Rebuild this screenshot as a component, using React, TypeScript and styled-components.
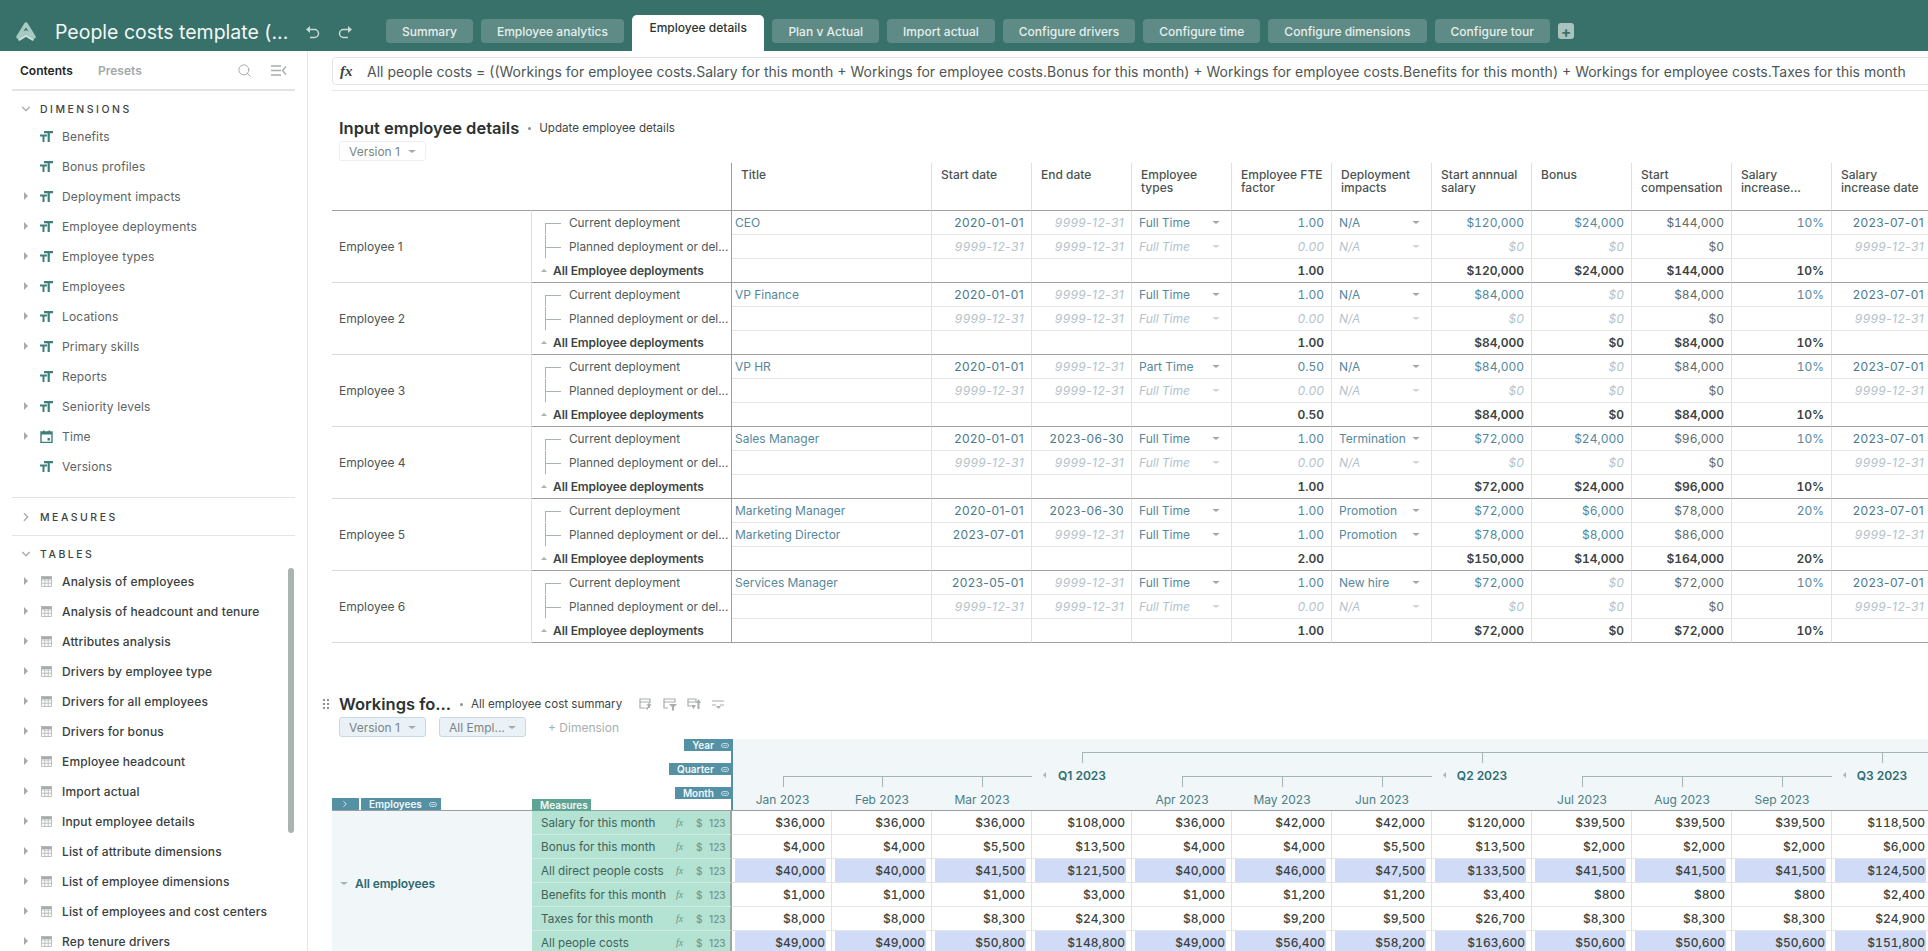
import React from 'react';
import styled, { createGlobalStyle } from 'styled-components';
import { ChevronDown, ChevronRight, Search } from 'lucide-react';

const GlobalStyle = createGlobalStyle`
  html, body {
    margin: 0;
    padding: 0;
    background: #fff;
    font-family: Inter, 'Liberation Sans', sans-serif;
    color: #3a4342;
  }
`;

const Shell = styled.div`
  display: flex;
  flex-direction: column;
  width: 1928px;
  height: 951px;
  overflow: hidden;
`;

/* top bar */
const TopBar = styled.header`
  display: flex;
  flex: 0 0 51px;
  background: #38706a;
`;

const Brand = styled.div`
  display: flex;
  align-items: center;
  width: 386px;
  height: 51px;
  padding: 12px 0 0 16px;
  box-sizing: border-box;
`;

const AppTitle = styled.div`
  width: 250px;
  margin-left: 19px;
  color: #f3f7f6;
  font-size: 19.5px;
  white-space: nowrap;
`;

const HistoryIcon = styled.svg`
  width: 16px;
  height: 16px;
  margin-right: 16px;
  flex: none;
`;

const Tabs = styled.nav`
  display: flex;
  align-items: flex-start;
  gap: 8px;
  padding-top: 19px;
`;

const Tab = styled.div<{ $active?: boolean }>`
  position: relative;
  display: flex;
  align-items: center;
  height: ${(p) => (p.$active ? '36px' : '24px')};
  margin-top: ${(p) => (p.$active ? '-4px' : '0')};
  padding: ${(p) => (p.$active ? '0 17.5px 12px' : '0 16px')};
  box-sizing: border-box;
  border-radius: ${(p) => (p.$active ? '5px 5px 0 0' : '4px')};
  background: ${(p) => (p.$active ? '#fff' : '#5f8b86')};
  color: ${(p) => (p.$active ? '#2c3534' : '#e6efed')};
  font-size: 12px;
  font-weight: 500;
  letter-spacing: 0.01px;
  white-space: nowrap;
`;

const AddTab = styled.div`
  display: flex;
  align-items: center;
  justify-content: center;
  width: 16px;
  height: 16px;
  margin-top: 4px;
  border-radius: 3px;
  background: #a9c3bf;
  color: #38706a;
  font-size: 15px;
  font-weight: 700;
  line-height: 1;
`;

const Body = styled.div`
  display: flex;
  flex: 1;
  min-height: 0;
`;

/* sidebar */
const Sidebar = styled.aside`
  flex: 0 0 308px;
  box-sizing: border-box;
  padding: 0 12px;
  border-right: 1px solid #e4e6e6;
  overflow: hidden;
`;

const SideTabs = styled.div`
  display: flex;
  align-items: center;
  height: 40px;
  box-sizing: border-box;
  padding: 0 8px;
  border-bottom: 2px solid #e3e5e5;
  font-size: 12px;
  font-weight: 600;
`;

const SideTab = styled.span<{ $on?: boolean }>`
  width: 78px;
  color: ${(p) => (p.$on ? '#1f2625' : '#a3a9a8')};
`;

const SideTools = styled.div`
  display: flex;
  align-items: center;
  gap: 19px;
  margin-left: auto;
  color: #a8adac;
`;

const SectionHead = styled.div<{ $h?: number; $line?: boolean; $top?: number }>`
  display: flex;
  align-items: center;
  height: ${(p) => p.$h ?? 25}px;
  margin-top: ${(p) => p.$top ?? 0}px;
  padding-top: 1px;
  box-sizing: border-box;
  color: #3d4443;
  font-size: 10.5px;
  font-weight: 500;
  letter-spacing: 2.5px;
  ${(p) => p.$line && 'border-top: 1px solid #e3e5e5; border-bottom: 1px solid #e3e5e5;'}
`;

const SectionChevron = styled.span`
  display: flex;
  justify-content: center;
  width: 28px;
  color: #a3a9a8;
`;

const SideList = styled.div<{ $gapEnd?: number }>`
  position: relative;
  padding-bottom: ${(p) => p.$gapEnd ?? 0}px;
`;

const SideItem = styled.div<{ $strong?: boolean }>`
  display: flex;
  align-items: center;
  height: 30px;
  color: ${(p) => (p.$strong ? '#3a4040' : '#5d6362')};
  font-size: 12px;
  font-weight: ${(p) => (p.$strong ? 500 : 400)};
  letter-spacing: 0.15px;
  white-space: nowrap;
`;

const CaretSlot = styled.span`
  display: flex;
  justify-content: center;
  width: 28px;
`;

const ItemIcon = styled.svg`
  flex: none;
  width: 13px;
  height: 13px;
  margin-right: 9px;
`;

const ScrollThumb = styled.div`
  position: absolute;
  top: 2px;
  right: 1px;
  width: 6px;
  height: 265px;
  border-radius: 3px;
  background: #abb4b2;
`;

const Caret = styled.i<{ $dir?: 'down' | 'right' | 'up' | 'left'; $color?: string; $size?: number }>`
  display: inline-block;
  flex: none;
  width: 0;
  height: 0;
  ${(p) => {
    const s = p.$size ?? 3;
    const c = p.$color ?? '#a6abaa';
    if (p.$dir === 'right') return `border-top: ${s + 1}px solid transparent; border-bottom: ${s + 1}px solid transparent; border-left: ${s + 1}px solid ${c};`;
    if (p.$dir === 'left') return `border-top: ${s}px solid transparent; border-bottom: ${s}px solid transparent; border-right: ${s}px solid ${c};`;
    if (p.$dir === 'up') return `border-left: ${s}px solid transparent; border-right: ${s}px solid transparent; border-bottom: ${s}px solid ${c};`;
    return `border-left: ${s + 1}px solid transparent; border-right: ${s + 1}px solid transparent; border-top: ${s}px solid ${c};`;
  }}
`;

/* main area */
const Main = styled.main`
  flex: 1;
  min-width: 0;
  padding: 6px 0 0 24px;
  overflow: hidden;
`;

const FormulaWrap = styled.div`
  width: 1700px;
  padding-bottom: 5px;
  border-bottom: 1px solid #e6e8e8;
`;

const FormulaBar = styled.div`
  display: flex;
  align-items: center;
  height: 28px;
  box-sizing: border-box;
  padding-left: 7px;
  border: 1px solid #e3e5e5;
  border-radius: 4px;
  color: #4e5655;
  font-size: 14px;
  white-space: nowrap;
`;

const FxMark = styled.span`
  width: 27px;
  color: #3b4443;
  font-family: 'Liberation Serif', serif;
  font-size: 15px;
  font-style: italic;
  font-weight: 700;
`;

const TitleRow = styled.div<{ $top: number }>`
  display: flex;
  align-items: center;
  height: 20px;
  margin-top: ${(p) => p.$top}px;
  padding-left: 7px;
`;

const DragHandle = styled.svg`
  width: 8px;
  height: 12px;
  margin: 0 9px 0 -17px;
`;

const BlockTitle = styled.h2`
  margin: 0;
  color: #2b3231;
  font-size: 16.5px;
  font-weight: 600;
  white-space: nowrap;
`;

const TitleDot = styled.span`
  width: 3px;
  height: 3px;
  margin: 0 8px 0 9px;
  border-radius: 50%;
  background: #8b9291;
`;

const BlockNote = styled.span`
  color: #3f4746;
  font-size: 11.6px;
  white-space: nowrap;
`;

const ViewTools = styled.div`
  display: flex;
  gap: 9px;
  margin-left: 17px;
`;

const FilterRow = styled.div`
  display: flex;
  align-items: center;
  gap: 13px;
  height: 20px;
  margin: 3px 0 2px;
  padding-left: 7px;
`;

const Chip = styled.div<{ $tint?: boolean }>`
  display: flex;
  align-items: center;
  justify-content: space-between;
  width: 87px;
  height: 20px;
  box-sizing: border-box;
  padding: 0 9px;
  border: 1px solid ${(p) => (p.$tint ? '#c6d8e3' : '#eeeeee')};
  border-radius: 3px;
  background: ${(p) => (p.$tint ? '#eaf2f7' : '#fff')};
  color: #7b8483;
  font-size: 12px;
`;

const AddDimension = styled.span`
  margin-left: 9px;
  color: #a9afae;
  font-size: 12px;
`;

/* input table */
const DetailGrid = styled.div`
  display: grid;
  grid-template-columns: 200px 200px 200px repeat(10, 100px);
  grid-template-rows: 48px;
  grid-auto-rows: 24px;
  width: 1600px;
`;

const HeadCell = styled.div<{ $blank?: boolean; $dark?: boolean }>`
  box-sizing: border-box;
  padding: 5px 0 0 9px;
  border-bottom: 1px solid #9c9f9f;
  border-right: 1px solid ${(p) => (p.$dark ? '#9c9f9f' : p.$blank ? 'transparent' : '#dfe1e1')};
  color: #4c5453;
  font-size: 12px;
  font-weight: 500;
  line-height: 13px;
  white-space: pre-line;
  overflow: hidden;
`;

const EmployeeCell = styled.div`
  display: flex;
  align-items: center;
  grid-row: span 3;
  padding-left: 7px;
  border-right: 1px solid #dfe1e1;
  border-bottom: 1px solid #d9dbdb;
  color: #4d5554;
  font-size: 12px;
`;

const TreeCell = styled.div<{ $first?: boolean }>`
  position: relative;
  display: flex;
  align-items: center;
  padding-left: 37px;
  border-right: 1px solid #9c9f9f;
  color: #515958;
  font-size: 11.8px;
  white-space: nowrap;

  &::before {
    content: '';
    position: absolute;
    left: 13px;
    top: ${(p) => (p.$first ? '12px' : '0')};
    bottom: 1px;
    width: 1px;
    background: #a9b3b2;
  }

  &::after {
    content: '';
    position: absolute;
    left: 13px;
    top: 12px;
    width: 16px;
    height: 1px;
    background: #a9b3b2;
  }
`;

const TotalLabel = styled.div`
  display: flex;
  align-items: center;
  gap: 6px;
  padding-left: 9px;
  border-right: 1px solid #9c9f9f;
  border-bottom: 1px solid #9c9f9f;
  color: #3d4544;
  font-size: 12px;
  font-weight: 600;
  letter-spacing: -0.1px;
  white-space: nowrap;
`;

type Kind = 'input' | 'ghost' | 'calc' | 'total';

const kindColor: Record<Kind, string> = {
  input: '#55889c',
  ghost: '#b3c2c9',
  calc: '#626a69',
  total: '#3c4241',
};

const ValueCell = styled.div<{ $kind: Kind; $left?: boolean; $tight?: boolean; $end?: boolean; $date?: boolean }>`
  display: flex;
  align-items: center;
  justify-content: ${(p) => (p.$tight ? 'flex-start' : p.$left ? 'space-between' : 'flex-end')};
  box-sizing: border-box;
  padding: ${(p) => (p.$tight ? '0 6px 0 3px' : p.$left ? '0 11px 0 7px' : '0 7px 0 0')};
  border-right: 1px solid #e0e2e2;
  border-bottom: 1px solid ${(p) => (p.$end ? '#9c9f9f' : '#e4e6e6')};
  color: ${(p) => (p.$date && p.$kind === 'input' ? '#4b7a8c' : kindColor[p.$kind])};
  font-size: 12px;
  font-style: ${(p) => (p.$kind === 'ghost' ? 'italic' : 'normal')};
  font-weight: ${(p) => (p.$kind === 'total' ? 600 : 400)};
  font-variant-numeric: ${(p) => (p.$date ? 'normal' : 'tabular-nums')};
  letter-spacing: ${(p) => (p.$date ? '0.4px' : '0')};
  white-space: nowrap;
  overflow: hidden;
`;

/* workings pivot */
const PivotHead = styled.div`
  display: flex;
  width: 1600px;
  height: 72px;
  box-sizing: border-box;
  border-bottom: 1px solid #9c9f9f;
`;

const RowAxis = styled.div`
  display: flex;
  flex: none;
  align-items: flex-end;
  width: 200px;
  gap: 2px;
`;

const MeasureAxis = styled.div`
  display: flex;
  flex: none;
  flex-direction: column;
  width: 201px;
  background: linear-gradient(#5491a5, #5491a5) right / 2px 100% no-repeat;
`;

const AxisStack = styled.div`
  display: flex;
  flex-direction: column;
  align-items: flex-end;
  gap: 12px;
`;

const AxisTag = styled.div<{ $green?: boolean; $w?: number }>`
  display: flex;
  align-items: center;
  gap: 7px;
  flex: none;
  width: ${(p) => (p.$w ? `${p.$w}px` : 'auto')};
  height: 12px;
  box-sizing: border-box;
  padding: 0 4px 0 8px;
  background: ${(p) => (p.$green ? '#5fa493' : '#5491a5')};
  color: #f2f8f8;
  font-size: 10px;
  font-weight: 600;
`;

const TimeHead = styled.div`
  display: grid;
  flex: none;
  grid-template-columns: 99px repeat(11, 100px);
  grid-auto-rows: 24px;
  background: #f1f6f8;
`;

const Bracket = styled.div<{ $line?: boolean; $half?: boolean; $tick?: boolean }>`
  position: relative;

  &::before {
    content: '';
    display: ${(p) => (p.$line ? 'block' : 'none')};
    position: absolute;
    top: 13px;
    left: ${(p) => (p.$half ? '50%' : '0')};
    right: 0;
    height: 1px;
    background: #a3b5b6;
  }

  &::after {
    content: '';
    display: ${(p) => (p.$tick ? 'block' : 'none')};
    position: absolute;
    top: 13px;
    bottom: 0;
    left: 50%;
    width: 1px;
    background: #a3b5b6;
  }
`;

const QuarterLabel = styled.div`
  position: relative;
  display: flex;
  align-items: center;
  justify-content: center;
  color: #2f6d72;
  font-size: 12px;
  font-weight: 600;
`;

const QuarterArrow = styled.span`
  position: absolute;
  left: 11px;
  top: 9px;
  display: flex;
`;

const MonthLabel = styled.div`
  display: flex;
  align-items: center;
  justify-content: center;
  color: #4a7f86;
  font-size: 12px;
`;

const PivotGrid = styled.div`
  display: grid;
  grid-template-columns: 200px 200px repeat(12, 100px);
  grid-auto-rows: 24px;
  width: 1600px;
`;

const GroupCell = styled.div`
  display: flex;
  align-items: center;
  gap: 7px;
  grid-row: span 6;
  padding-left: 8px;
  background: #f1f6f8;
  color: #2c6a6e;
  font-size: 12px;
  font-weight: 600;
  letter-spacing: -0.1px;
`;

const MeasureCell = styled.div`
  display: flex;
  align-items: center;
  padding-left: 9px;
  border-right: 2px solid #9da5a3;
  border-bottom: 1px solid #d0ebe2;
  background: #b4e2d3;
  color: #41625a;
  font-size: 11.7px;
  white-space: nowrap;
`;

const MeasureName = styled.span`
  flex: 1;
  min-width: 0;
`;

const MeasureMeta = styled.span<{ $w: number; $serif?: boolean }>`
  flex: none;
  width: ${(p) => p.$w}px;
  color: #73958c;
  font-family: ${(p) => (p.$serif ? "'Liberation Serif', serif" : 'inherit')};
  font-size: 10px;
  font-style: ${(p) => (p.$serif ? 'italic' : 'normal')};
  font-weight: ${(p) => (p.$serif ? 400 : 500)};
`;

const PivotCell = styled.div`
  display: flex;
  padding: 0 5px 0 3px;
  border-right: 1px solid #e0e2e2;
  border-bottom: 1px solid #e4e6e6;
`;

const PivotValue = styled.span<{ $hl?: boolean }>`
  display: flex;
  flex: 1;
  align-items: center;
  justify-content: flex-end;
  padding-right: 1px;
  background: ${(p) => (p.$hl ? '#d0dbf7' : 'transparent')};
  color: #3b4140;
  font-size: 12px;
  font-weight: 500;
  font-variant-numeric: tabular-nums;
`;

/* drawn icons */
const Logo = () => (
  <svg width="20" height="20" viewBox="0 0 20 20" style={{ flex: 'none' }}>
    <path d="M10 2 L18 15 L10 10 L2 15 Z" fill="#38706a" stroke="#a9c9c3" strokeWidth="3.4" strokeLinejoin="round" />
    <path d="M3.5 17.500 L10 13.500 L16.500 17.500" fill="none" stroke="#c9dfda" strokeWidth="2.6" strokeLinecap="round" strokeLinejoin="round" />
  </svg>
);

const Undo = ({ flip }: { flip?: boolean }) => (
  <HistoryIcon viewBox="0 0 16 16" style={flip ? { transform: 'scaleX(-1)' } : undefined}>
    <path d="M5 2 L1 5.5 L5 9 Z" fill="#c8d9d6" />
    <path d="M4 5.5 H9.5 A4 4 0 0 1 9.5 13.5 H5" fill="none" stroke="#c8d9d6" strokeWidth="1.5" />
  </HistoryIcon>
);

const TypeIcon = () => (
  <ItemIcon viewBox="0 0 13 13">
    <path d="M0 4.500h7v2H4.500V12h-2V6.500H0z" fill="#3f7f7b" />
    <path d="M4 1h9v2.200H9.800V12H7.600V3.200H4z" fill="#3f7f7b" />
  </ItemIcon>
);

const CalendarIcon = () => (
  <ItemIcon viewBox="0 0 13 13">
    <path d="M1 2h11v10.5H1z" fill="none" stroke="#3f7f7b" strokeWidth="1.4" />
    <path d="M1 2h11v2.6H1zM3 0.4h1.5V3H3zM8.5 0.4H10V3H8.5zM7.5 8H10v2.4H7.5z" fill="#3f7f7b" />
  </ItemIcon>
);

const TableIcon = () => (
  <ItemIcon viewBox="0 0 13 13">
    <path d="M1 1h11v3H1z" fill="#a5abaa" />
    <path d="M1.5 1.5h10v10h-10zM1.5 5h10M1.5 8.2h10M4.8 4v7.5M8.2 4v7.5" fill="none" stroke="#b5bab9" strokeWidth="0.9" />
  </ItemIcon>
);

const CollapseIcon = () => (
  <svg width="16" height="11" viewBox="0 0 16 11">
    <path d="M0 1h10M0 5.5h10M0 10h10" stroke="#a8adac" strokeWidth="1.4" />
    <path d="M15 1.5 L11.5 5.5 L15 9.5" fill="none" stroke="#a8adac" strokeWidth="1.4" />
  </svg>
);

const LinkGlyph = () => (
  <svg width="8" height="5" viewBox="0 0 8 5" style={{ flex: 'none' }}>
    <rect x="0.5" y="0.5" width="7" height="4" rx="2" fill="none" stroke="#c9dee4" strokeWidth="1" />
    <path d="M2 2.5h4" stroke="#c9dee4" strokeWidth="0.8" />
  </svg>
);

const viewTools = [
  { line: 'M1 2h10v3H1zM1 2v9h5M11 5v1', solid: 'M10 6l3 2.500h-2V11H9V8.500H7zM6 11l3-1v3z' },
  { line: 'M1 2h11v3H1zM1 2v9h4', solid: 'M6 7h8l-3 3v3.500h-2V10z' },
  { line: 'M1 2h8v3H1zM1 2v7h3', solid: 'M4 8h5l-2.500 4zM9 6l2.500-4L14 6h-1.500v6h-2V6z' },
  { line: 'M1 4h12M1 8h4M9 8h4', solid: 'M5 9h5l-2.500 3z' },
];

const ViewTool = ({ line, solid }: { line: string; solid: string }) => (
  <svg width="15" height="14" viewBox="0 0 15 14">
    <path d={line} fill="none" stroke="#a9aead" strokeWidth="1.200" />
    <path d={solid} fill="#a9aead" />
  </svg>
);

/* data */
const dimensions: [string, boolean, boolean?][] = [
  ['Benefits', false],
  ['Bonus profiles', false],
  ['Deployment impacts', true],
  ['Employee deployments', true],
  ['Employee types', true],
  ['Employees', true],
  ['Locations', true],
  ['Primary skills', true],
  ['Reports', false],
  ['Seniority levels', true],
  ['Time', true, true],
  ['Versions', false],
];

const tables = [
  'Analysis of employees',
  'Analysis of headcount and tenure',
  'Attributes analysis',
  'Drivers by employee type',
  'Drivers for all employees',
  'Drivers for bonus',
  'Employee headcount',
  'Import actual',
  'Input employee details',
  'List of attribute dimensions',
  'List of employee dimensions',
  'List of employees and cost centers',
  'Rep tenure drivers',
];

const tabs = ['Summary', 'Employee analytics', 'Employee details', 'Plan v Actual', 'Import actual', 'Configure drivers', 'Configure time', 'Configure dimensions', 'Configure tour'];

const columns = ['Title', 'Start date', 'End date', 'Employee\ntypes', 'Employee FTE\nfactor', 'Deployment\nimpacts', 'Start annnual\nsalary', 'Bonus', 'Start\ncompensation', 'Salary\nincrease...', 'Salary\nincrease date'];

// ~ marks a greyed default, = a calculated value
const open = '~9999-12-31';
const planned = ['', open, open, '~Full Time', '~0.00', '~N/A', '~$0', '~$0', '=$0', '', open];

const employees = [
  {
    name: 'Employee 1',
    rows: [['CEO', '2020-01-01', open, 'Full Time', '1.00', 'N/A', '$120,000', '$24,000', '=$144,000', '10%', '2023-07-01'], planned],
    total: ['1.00', '$120,000', '$24,000', '$144,000', '10%'],
  },
  {
    name: 'Employee 2',
    rows: [['VP Finance', '2020-01-01', open, 'Full Time', '1.00', 'N/A', '$84,000', '~$0', '=$84,000', '10%', '2023-07-01'], planned],
    total: ['1.00', '$84,000', '$0', '$84,000', '10%'],
  },
  {
    name: 'Employee 3',
    rows: [['VP HR', '2020-01-01', open, 'Part Time', '0.50', 'N/A', '$84,000', '~$0', '=$84,000', '10%', '2023-07-01'], planned],
    total: ['0.50', '$84,000', '$0', '$84,000', '10%'],
  },
  {
    name: 'Employee 4',
    rows: [['Sales Manager', '2020-01-01', '2023-06-30', 'Full Time', '1.00', 'Termination', '$72,000', '$24,000', '=$96,000', '10%', '2023-07-01'], planned],
    total: ['1.00', '$72,000', '$24,000', '$96,000', '10%'],
  },
  {
    name: 'Employee 5',
    rows: [
      ['Marketing Manager', '2020-01-01', '2023-06-30', 'Full Time', '1.00', 'Promotion', '$72,000', '$6,000', '=$78,000', '20%', '2023-07-01'],
      ['Marketing Director', '2023-07-01', open, 'Full Time', '1.00', 'Promotion', '$78,000', '$8,000', '=$86,000', '', open],
    ],
    total: ['2.00', '$150,000', '$14,000', '$164,000', '20%'],
  },
  {
    name: 'Employee 6',
    rows: [['Services Manager', '2023-05-01', open, 'Full Time', '1.00', 'New hire', '$72,000', '~$0', '=$72,000', '10%', '2023-07-01'], planned],
    total: ['1.00', '$72,000', '$0', '$72,000', '10%'],
  },
];

const measures: { name: string; hl?: boolean; values: string[] }[] = [
  { name: 'Salary for this month', values: ['$36,000', '$36,000', '$36,000', '$108,000', '$36,000', '$42,000', '$42,000', '$120,000', '$39,500', '$39,500', '$39,500', '$118,500'] },
  { name: 'Bonus for this month', values: ['$4,000', '$4,000', '$5,500', '$13,500', '$4,000', '$4,000', '$5,500', '$13,500', '$2,000', '$2,000', '$2,000', '$6,000'] },
  { name: 'All direct people costs', hl: true, values: ['$40,000', '$40,000', '$41,500', '$121,500', '$40,000', '$46,000', '$47,500', '$133,500', '$41,500', '$41,500', '$41,500', '$124,500'] },
  { name: 'Benefits for this month', values: ['$1,000', '$1,000', '$1,000', '$3,000', '$1,000', '$1,200', '$1,200', '$3,400', '$800', '$800', '$800', '$2,400'] },
  { name: 'Taxes for this month', values: ['$8,000', '$8,000', '$8,300', '$24,300', '$8,000', '$9,200', '$9,500', '$26,700', '$8,300', '$8,300', '$8,300', '$24,900'] },
  { name: 'All people costs', hl: true, values: ['$49,000', '$49,000', '$50,800', '$148,800', '$49,000', '$56,400', '$58,200', '$163,600', '$50,600', '$50,600', '$50,600', '$151,800'] },
];

const timeColumns = ['Jan 2023', 'Feb 2023', 'Mar 2023', 'Q1 2023', 'Apr 2023', 'May 2023', 'Jun 2023', 'Q2 2023', 'Jul 2023', 'Aug 2023', 'Sep 2023', 'Q3 2023'];

const isQuarter = (label: string) => label.startsWith('Q');

function readCell(raw: string): { text: string; kind: Kind } {
  if (raw.startsWith('~')) return { text: raw.slice(1), kind: 'ghost' };
  if (raw.startsWith('=')) return { text: raw.slice(1), kind: 'calc' };
  return { text: raw, kind: 'input' };
}

function DetailValue({ raw, index }: { raw: string; index: number }) {
  const { text, kind } = readCell(raw);
  const select = index === 3 || index === 5;
  return (
    <ValueCell $kind={kind} $left={select} $tight={index === 0} $date={/^\d{4}-/.test(text)}>
      {text}
      {select && <Caret $color={kind === 'ghost' ? '#d0d5d6' : '#a6abaa'} />}
    </ValueCell>
  );
}

function InputEmployeeDetails() {
  return (
    <DetailGrid>
      <HeadCell $blank />
      <HeadCell $blank $dark />
      {columns.map((c) => (
        <HeadCell key={c}>{c}</HeadCell>
      ))}
      {employees.map((e) => (
        <React.Fragment key={e.name}>
          <EmployeeCell>{e.name}</EmployeeCell>
          {e.rows.map((row, r) => (
            <React.Fragment key={r}>
              <TreeCell $first={r === 0}>{r === 0 ? 'Current deployment' : 'Planned deployment or del...'}</TreeCell>
              {row.map((raw, i) => (
                <DetailValue key={i} raw={raw} index={i} />
              ))}
            </React.Fragment>
          ))}
          <TotalLabel>
            <Caret $dir="up" $color="#a9b3b2" />
            All Employee deployments
          </TotalLabel>
          {['', '', '', '', e.total[0], '', e.total[1], e.total[2], e.total[3], e.total[4], ''].map((t, i) => (
            <ValueCell key={i} $kind="total" $end>
              {t}
            </ValueCell>
          ))}
        </React.Fragment>
      ))}
    </DetailGrid>
  );
}

function Workings() {
  return (
    <>
      <PivotHead>
        <RowAxis>
          <AxisTag $w={27}>
            <ChevronRight size={10} strokeWidth={2} />
          </AxisTag>
          <AxisTag $w={80}>
            Employees
            <LinkGlyph />
          </AxisTag>
        </RowAxis>
        <MeasureAxis>
          <AxisStack>
            {['Year', 'Quarter', 'Month'].map((t) => (
              <AxisTag key={t}>
                {t}
                <LinkGlyph />
              </AxisTag>
            ))}
          </AxisStack>
          <AxisTag $green $w={59}>
            Measures
          </AxisTag>
        </MeasureAxis>
        <TimeHead>
          {timeColumns.map((c, i) => (
            <Bracket key={c} $line={i >= 3} $half={i === 3} $tick={isQuarter(c)} />
          ))}
          {timeColumns.map((c, i) =>
            isQuarter(c) ? (
              <QuarterLabel key={c}>
                <QuarterArrow>
                  <Caret $dir="left" $size={3} $color="#a3b5b6" />
                </QuarterArrow>
                {c}
              </QuarterLabel>
            ) : (
              <Bracket key={c} $line $half={i % 4 === 0} $tick />
            ),
          )}
          {timeColumns.map((c) => (
            <MonthLabel key={c}>{isQuarter(c) ? '' : c}</MonthLabel>
          ))}
        </TimeHead>
      </PivotHead>
      <PivotGrid>
        <GroupCell>
          <Caret $color="#a3b5b6" />
          All employees
        </GroupCell>
        {measures.map((m) => (
          <React.Fragment key={m.name}>
            <MeasureCell>
              <MeasureName>{m.name}</MeasureName>
              <MeasureMeta $w={20} $serif>
                fx
              </MeasureMeta>
              <MeasureMeta $w={13}>$</MeasureMeta>
              <MeasureMeta $w={21}>123</MeasureMeta>
            </MeasureCell>
            {m.values.map((v, i) => (
              <PivotCell key={i}>
                <PivotValue $hl={m.hl}>{v}</PivotValue>
              </PivotCell>
            ))}
          </React.Fragment>
        ))}
      </PivotGrid>
    </>
  );
}

export default function App() {
  return (
    <Shell>
      <GlobalStyle />
      <TopBar>
        <Brand>
          <Logo />
          <AppTitle>People costs template (...</AppTitle>
          <Undo />
          <Undo flip />
        </Brand>
        <Tabs>
          {tabs.map((t) => (
            <Tab key={t} $active={t === 'Employee details'}>
              {t}
            </Tab>
          ))}
          <AddTab>+</AddTab>
        </Tabs>
      </TopBar>
      <Body>
        <Sidebar>
          <SideTabs>
            <SideTab $on>Contents</SideTab>
            <SideTab>Presets</SideTab>
            <SideTools>
              <Search size={15} strokeWidth={1.6} />
              <CollapseIcon />
            </SideTools>
          </SideTabs>
          <SectionHead $top={5}>
            <SectionChevron>
              <ChevronDown size={14} />
            </SectionChevron>
            DIMENSIONS
          </SectionHead>
          <SideList $gapEnd={16}>
            {dimensions.map(([name, expandable, time]) => (
              <SideItem key={name}>
                <CaretSlot>{expandable && <Caret $dir="right" $size={3} />}</CaretSlot>
                {time ? <CalendarIcon /> : <TypeIcon />}
                {name}
              </SideItem>
            ))}
          </SideList>
          <SectionHead $h={39} $line>
            <SectionChevron>
              <ChevronRight size={14} />
            </SectionChevron>
            MEASURES
          </SectionHead>
          <SectionHead $top={5}>
            <SectionChevron>
              <ChevronDown size={14} />
            </SectionChevron>
            TABLES
          </SectionHead>
          <SideList>
            {tables.map((name) => (
              <SideItem key={name} $strong>
                <CaretSlot>
                  <Caret $dir="right" $size={3} />
                </CaretSlot>
                <TableIcon />
                {name}
              </SideItem>
            ))}
            <ScrollThumb />
          </SideList>
        </Sidebar>
        <Main>
          <FormulaWrap>
            <FormulaBar>
              <FxMark>fx</FxMark>
              All people costs = ((Workings for employee costs.Salary for this month + Workings for employee costs.Bonus for this month) + Workings for employee costs.Benefits for this month) + Workings for employee costs.Taxes for this month
            </FormulaBar>
          </FormulaWrap>
          <TitleRow $top={27}>
            <BlockTitle>Input employee details</BlockTitle>
            <TitleDot />
            <BlockNote>Update employee details</BlockNote>
          </TitleRow>
          <FilterRow>
            <Chip>
              Version 1
              <Caret />
            </Chip>
          </FilterRow>
          <InputEmployeeDetails />
          <TitleRow $top={51}>
            <DragHandle viewBox="0 0 8 12">
              <path d="M1 1h2v2H1zM5 1h2v2H5zM1 5h2v2H1zM5 5h2v2H5zM1 9h2v2H1zM5 9h2v2H5z" fill="#8b9291" />
            </DragHandle>
            <BlockTitle>Workings fo...</BlockTitle>
            <TitleDot />
            <BlockNote>All employee cost summary</BlockNote>
            <ViewTools>
              {viewTools.map((t) => (
                <ViewTool key={t.line} line={t.line} solid={t.solid} />
              ))}
            </ViewTools>
          </TitleRow>
          <FilterRow>
            <Chip $tint>
              Version 1
              <Caret />
            </Chip>
            <Chip $tint>
              All Empl...
              <Caret />
            </Chip>
            <AddDimension>+ Dimension</AddDimension>
          </FilterRow>
          <Workings />
        </Main>
      </Body>
    </Shell>
  );
}
